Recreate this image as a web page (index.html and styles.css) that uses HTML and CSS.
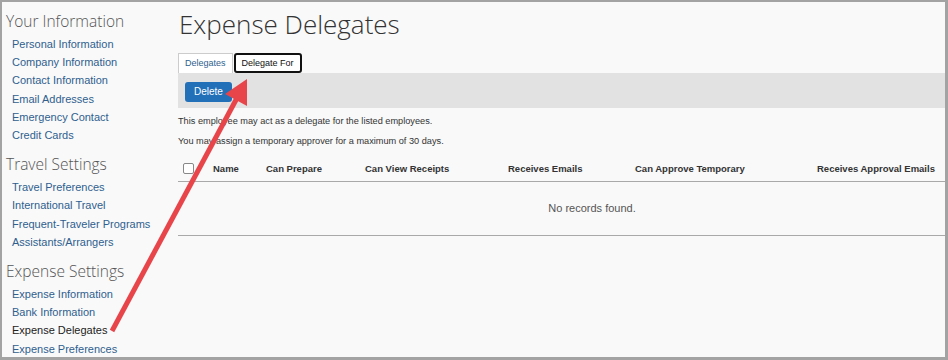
FILE: index.html
```html
<!DOCTYPE html>
<html lang="en">
<head>
  <meta charset="UTF-8">
  <title>Expense Delegates</title>
  <link rel="stylesheet" href="styles.css">
</head>
<body>

<div class="frame">
  <div class="sidebar">
    <h3>Your Information</h3>
    <ul>
      <li><a href="#">Personal Information</a></li>
      <li><a href="#">Company Information</a></li>
      <li><a href="#">Contact Information</a></li>
      <li><a href="#">Email Addresses</a></li>
      <li><a href="#">Emergency Contact</a></li>
      <li><a href="#">Credit Cards</a></li>
    </ul>
    <h3>Travel Settings</h3>
    <ul>
      <li><a href="#">Travel Preferences</a></li>
      <li><a href="#">International Travel</a></li>
      <li><a href="#">Frequent-Traveler Programs</a></li>
      <li><a href="#">Assistants/Arrangers</a></li>
    </ul>
    <h3>Expense Settings</h3>
    <ul>
      <li><a href="#">Expense Information</a></li>
      <li><a href="#">Bank Information</a></li>
      <li><a href="#" class="current">Expense Delegates</a></li>
      <li><a href="#">Expense Preferences</a></li>
    </ul>
  </div>

  <div class="main">
    <h1>Expense Delegates</h1>

    <div class="tabs">
      <div class="tab">Delegates</div>
      <div class="tab tab-marked">Delegate For</div>
    </div>

    <div class="toolbar">
      <button class="btn-delete">Delete</button>
    </div>

    <p class="note">This employee may act as a delegate for the listed employees.</p>
    <p class="note">You may assign a temporary approver for a maximum of 30 days.</p>

    <div class="grid-head">
      <span class="check"></span>
      <span>Name</span>
      <span>Can Prepare</span>
      <span>Can View Receipts</span>
      <span>Receives Emails</span>
      <span>Can Approve Temporary</span>
      <span>Receives Approval Emails</span>
    </div>
    <div class="grid-empty">No records found.</div>
  </div>

  <svg class="arrow" width="948" height="360" viewBox="0 0 948 360">
    <line x1="112" y1="331" x2="237" y2="98" stroke="#e8454b" stroke-width="5"/>
    <polygon points="247,79 247,106 225,94" fill="#e8454b"/>
  </svg>
</div>

</body>
</html>
```

FILE: styles.css
```css
body {
  margin: 0;
  font-family: "Liberation Sans", Arial, sans-serif;
  background: #f9f9f9;
}

.frame {
  position: relative;
  box-sizing: border-box;
  width: 948px;
  height: 360px;
  border: 2px solid #a3a3a3;
  border-right-width: 3px;
  border-bottom-width: 3px;
  display: flex;
  overflow: hidden;
}

.sidebar {
  width: 176px;
  flex-shrink: 0;
  padding-top: 9px;
}

.sidebar h3 {
  margin: 0 0 4px 4px;
  font-family: "Open Sans", sans-serif;
  font-weight: 300;
  font-size: 15.5px;
  line-height: 20px;
  color: #555;
}

.sidebar ul {
  list-style: none;
  margin: 0 0 10px 0;
  padding: 0 0 0 10px;
}

.sidebar li {
  line-height: 18.2px;
  font-size: 11px;
}

.sidebar a {
  color: #2f5f8f;
  text-decoration: none;
}

.sidebar a.current {
  color: #222;
}

.main {
  flex: 1;
  padding-top: 5px;
}

h1 {
  margin: 0 0 12px 1px;
  font-family: "Open Sans", sans-serif;
  font-weight: 300;
  font-size: 26px;
  line-height: 34px;
  color: #333;
}

.tabs {
  display: flex;
  gap: 1px;
  height: 20px;
}

.tab {
  box-sizing: border-box;
  height: 20px;
  padding: 0 6px;
  font-size: 9px;
  line-height: 19px;
  white-space: nowrap;
  color: #2f5f8f;
  background: #fff;
  border: 1px solid #ccc;
  border-bottom: none;
}

.tab-marked {
  color: #111;
  border: 2px solid #111;
  border-radius: 3px;
  line-height: 16px;
  padding: 0 6px;
}

.toolbar {
  height: 35px;
  background: #e1e2e1;
  padding: 8px 7px 0;
  box-sizing: border-box;
}

.btn-delete {
  height: 20px;
  padding: 0 9px;
  border: none;
  border-radius: 3px;
  background: #2170b8;
  color: #fff;
  font-family: inherit;
  font-size: 10px;
}

.note {
  margin: 0;
  font-size: 9.2px;
  line-height: 20px;
  color: #333;
}

.note:first-of-type {
  margin-top: 3px;
}

.grid-head {
  display: grid;
  grid-template-columns: 30px 53px 99px 143px 127px 182px 1fr;
  align-items: center;
  height: 26px;
  margin-top: 4px;
  padding-left: 5px;
  border-bottom: 1px solid #a9a9a9;
  font-size: 9.5px;
  font-weight: bold;
  color: #333;
}

.check {
  width: 11px;
  height: 11px;
  box-sizing: border-box;
  border: 1px solid #888;
  border-radius: 2px;
  background: #fff;
}

.grid-empty {
  height: 53px;
  line-height: 53px;
  padding-left: 61px;
  text-align: center;
  font-size: 11px;
  color: #555;
  border-bottom: 1px solid #a9a9a9;
}

.arrow {
  position: absolute;
  left: -2px;
  top: -2px;
  pointer-events: none;
}
```
